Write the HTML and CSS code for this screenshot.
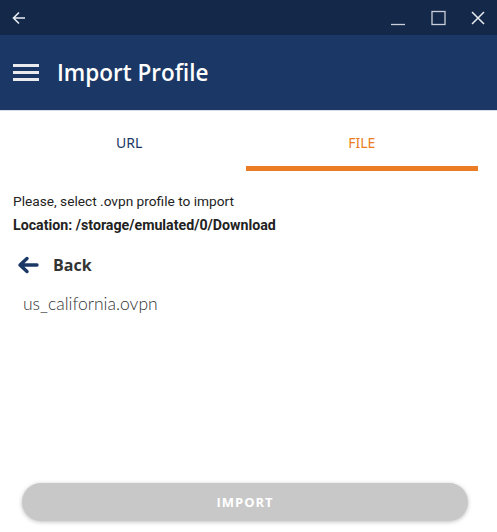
FILE: index.html
```html
<!DOCTYPE html>
<html>
<head>
<meta charset="utf-8">
<link rel="stylesheet" href="styles.css">
</head>
<body>
<div class="app">
  <div class="titlebar">
    <svg class="tb-back" width="16" height="16" viewBox="0 0 16 16"><path d="M14 8H2.5M8 2.5L2.5 8 8 13.5" fill="none" stroke="#e8ecf2" stroke-width="1.6"/></svg>
    <div class="tb-controls">
      <svg width="16" height="16" viewBox="0 0 16 16"><path d="M1 14.5H15" stroke="#c9ced8" stroke-width="1.3"/></svg>
      <svg width="16" height="16" viewBox="0 0 16 16"><rect x="2" y="1.5" width="13" height="13" fill="none" stroke="#c9ced8" stroke-width="1.3"/></svg>
      <svg width="16" height="16" viewBox="0 0 16 16"><path d="M2 2L14 14M14 2L2 14" stroke="#e8ecf2" stroke-width="1.5"/></svg>
    </div>
  </div>
  <div class="header">
    <div class="hamburger"><span></span><span></span><span></span></div>
    <div class="title">Import Profile</div>
  </div>
  <div class="tabs">
    <div class="tab">URL</div>
    <div class="tab active">FILE</div>
  </div>
  <div class="content">
    <p class="hint">Please, select .ovpn profile to import</p>
    <p class="location">Location: /storage/emulated/0/Download</p>
    <div class="back-row">
      <svg width="22" height="18" viewBox="0 0 22 18"><path d="M20 9H4M10 2.5L3 9l7 6.5" fill="none" stroke="#1b3765" stroke-width="3.4" stroke-linecap="round" stroke-linejoin="round"/></svg>
      <span>Back</span>
    </div>
    <div class="file">us_california.ovpn</div>
  </div>
  <div class="footer">
    <button class="import">IMPORT</button>
  </div>
</div>
</body>
</html>
```
FILE: styles.css
```css
html, body { margin: 0; padding: 0; }
body { width: 497px; height: 532px; background: #fff; overflow: hidden; }
.app { display: flex; flex-direction: column; height: 532px; }
.titlebar {
  height: 35px; background: #142849; display: flex; align-items: center;
  justify-content: space-between; padding: 0 11px 0 11px; box-sizing: border-box;
}
.tb-controls { display: flex; gap: 24px; align-items: center; }
.header {
  height: 76px; background: #1b3765; display: flex; align-items: center;
  padding-left: 13px; box-sizing: border-box; border-bottom: 1px solid #d8dee8;
}
.hamburger { display: flex; flex-direction: column; gap: 4px; width: 26px; }
.hamburger span { display: block; height: 3px; background: #e9ebef; }
.title {
  margin-left: 18px; color: #fff; font-family: "Open Sans", sans-serif;
  font-size: 22.5px; font-weight: 600; letter-spacing: 0; margin-top: -1px;
}
.tabs { display: flex; padding: 0 19px 0 13px; height: 60px; }
.tab {
  flex: 1; display: flex; align-items: center; justify-content: center;
  font-family: "Noto Sans", sans-serif; font-size: 14px; color: #1b3765;
  box-sizing: border-box; padding-top: 2px;
}
.tab.active { color: #ea7d24; border-bottom: 5px solid #ea7d24; padding-top: 7px; }
.content { padding: 0 13px; flex: 1; }
.hint { margin: 22px 0 0; font-family: Roboto, sans-serif; font-size: 13.7px; color: #222; }
.location { margin: 8px 0 0; font-family: Roboto, sans-serif; font-size: 14.2px; font-weight: 700; color: #222; }
.back-row { display: flex; align-items: center; margin-top: 21px; padding-left: 4px; }
.back-row span { margin-left: 14px; font-family: "Open Sans", sans-serif; font-weight: 700; font-size: 16px; color: #333; }
.file { margin: 17px 0 0 10px; font-family: Lato, sans-serif; font-weight: 300; font-size: 17.5px; color: #333; }
.footer { padding: 0 29px 11px 22px; }
.import {
  width: 100%; height: 38px; border: none; border-radius: 19px; background: #c8c8c8;
  color: #fff; font-family: "Open Sans", sans-serif; font-weight: 700; font-size: 13px;
  letter-spacing: 1px; box-shadow: 0 1px 4px rgba(0,0,0,0.25);
}
```
